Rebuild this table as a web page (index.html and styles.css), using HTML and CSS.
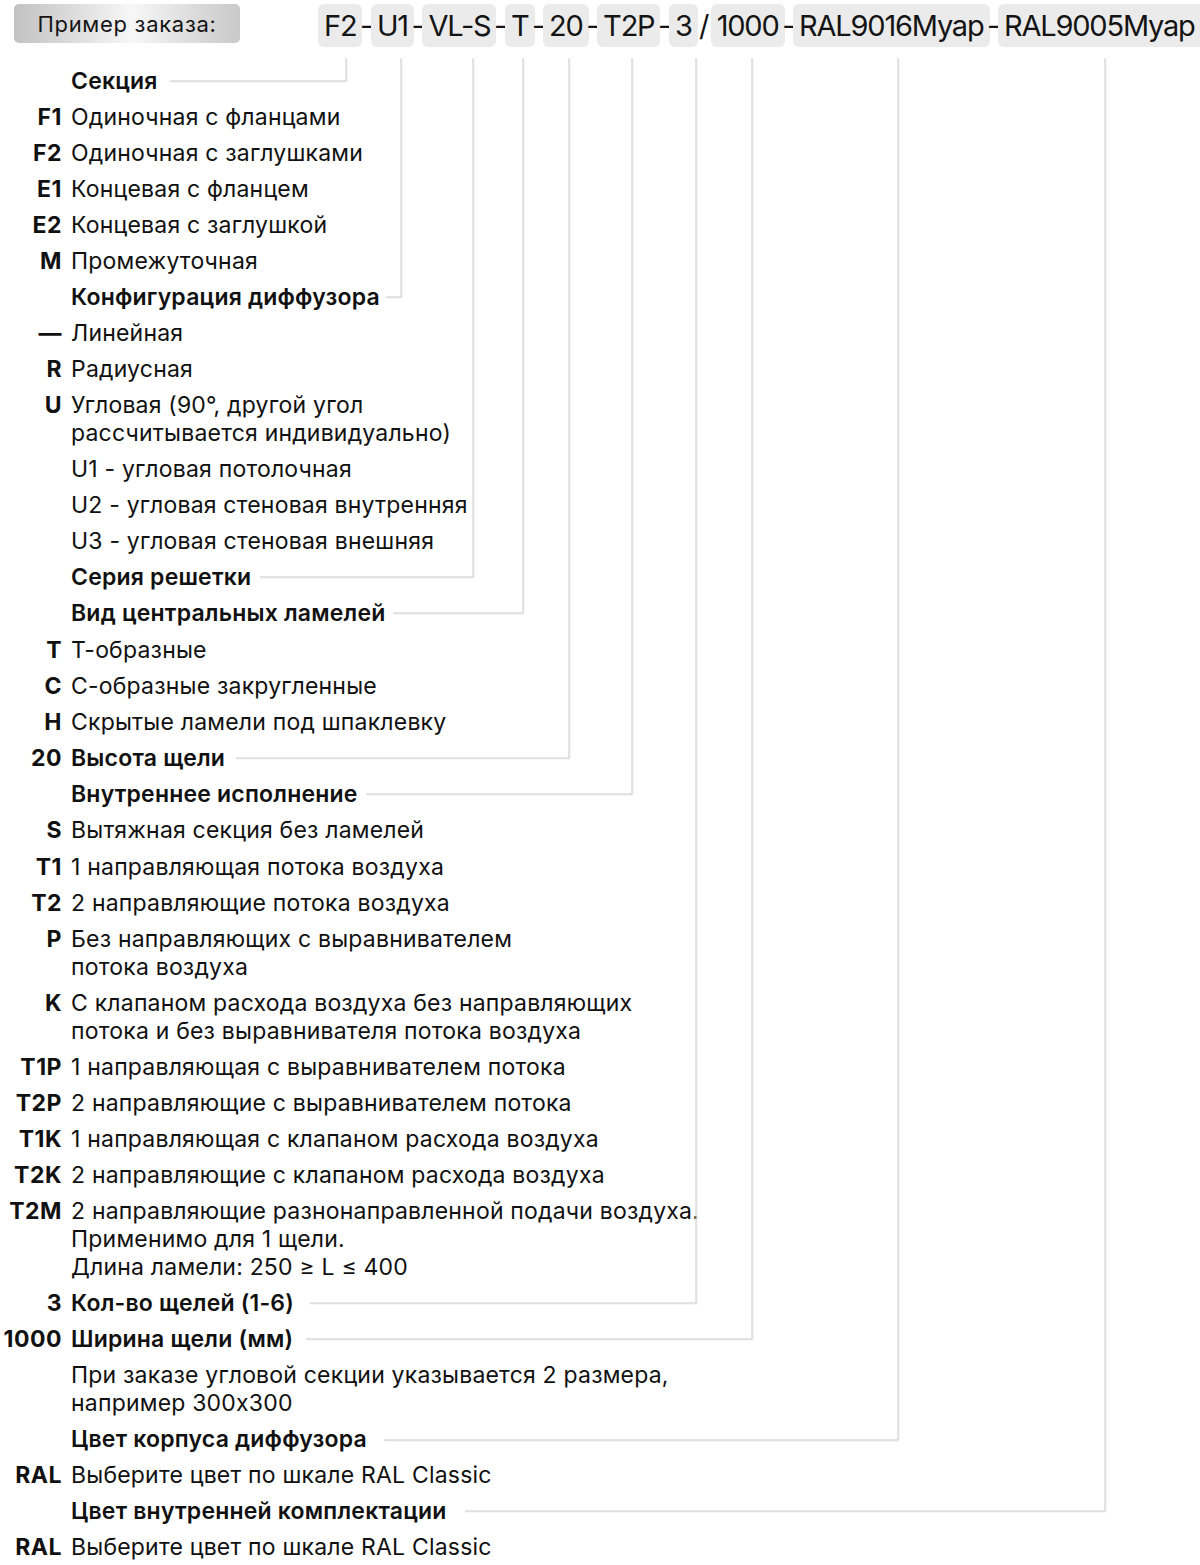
FILE: index.html
```html
<!DOCTYPE html>
<html lang="ru">
<head>
<meta charset="utf-8">
<title>Пример заказа</title>
<link rel="stylesheet" href="styles.css">
</head>
<body>
<div class="page">
  <header class="order">
    <div class="order-label">Пример заказа:</div>
    <div class="chips">
      <span class="chip">F2</span><span class="sep">-</span>
      <span class="chip">U1</span><span class="sep">-</span>
      <span class="chip">VL-S</span><span class="sep">-</span>
      <span class="chip">T</span><span class="sep">-</span>
      <span class="chip">20</span><span class="sep">-</span>
      <span class="chip">T2P</span><span class="sep">-</span>
      <span class="chip">3</span><span class="sep slash">/</span>
      <span class="chip">1000</span><span class="sep">-</span>
      <span class="chip">RAL9016Myap</span><span class="sep">-</span>
      <span class="chip last">RAL9005Myap</span>
    </div>
  </header>

  <ul class="legend">
    <li class="row head"><span class="code"></span><span class="desc">Секция</span></li>
    <li class="row"><span class="code">F1</span><span class="desc">Одиночная с фланцами</span></li>
    <li class="row"><span class="code">F2</span><span class="desc">Одиночная с заглушками</span></li>
    <li class="row"><span class="code">E1</span><span class="desc">Концевая с фланцем</span></li>
    <li class="row"><span class="code">E2</span><span class="desc">Концевая с заглушкой</span></li>
    <li class="row"><span class="code">M</span><span class="desc">Промежуточная</span></li>
    <li class="row head"><span class="code"></span><span class="desc">Конфигурация диффузора</span></li>
    <li class="row"><span class="code">—</span><span class="desc">Линейная</span></li>
    <li class="row"><span class="code">R</span><span class="desc">Радиусная</span></li>
    <li class="row"><span class="code">U</span><span class="desc">Угловая (90°, другой угол<br>рассчитывается индивидуально)</span></li>
    <li class="row"><span class="code"></span><span class="desc">U1 - угловая потолочная</span></li>
    <li class="row"><span class="code"></span><span class="desc">U2 - угловая стеновая внутренняя</span></li>
    <li class="row"><span class="code"></span><span class="desc">U3 - угловая стеновая внешняя</span></li>
    <li class="row head"><span class="code"></span><span class="desc">Серия решетки</span></li>
    <li class="row head"><span class="code"></span><span class="desc">Вид центральных ламелей</span></li>
    <li class="row nudge"><span class="code">T</span><span class="desc">Т-образные</span></li>
    <li class="row"><span class="code">C</span><span class="desc">С-образные закругленные</span></li>
    <li class="row"><span class="code">H</span><span class="desc">Скрытые ламели под шпаклевку</span></li>
    <li class="row head"><span class="code">20</span><span class="desc">Высота щели</span></li>
    <li class="row head"><span class="code"></span><span class="desc">Внутреннее исполнение</span></li>
    <li class="row"><span class="code">S</span><span class="desc">Вытяжная секция без ламелей</span></li>
    <li class="row nudge"><span class="code">T1</span><span class="desc">1 направляющая потока воздуха</span></li>
    <li class="row"><span class="code">T2</span><span class="desc">2 направляющие потока воздуха</span></li>
    <li class="row"><span class="code">P</span><span class="desc">Без направляющих с выравнивателем<br>потока воздуха</span></li>
    <li class="row"><span class="code">K</span><span class="desc">С клапаном расхода воздуха без направляющих<br>потока и без выравнивателя потока воздуха</span></li>
    <li class="row"><span class="code">T1P</span><span class="desc">1 направляющая с выравнивателем потока</span></li>
    <li class="row"><span class="code">T2P</span><span class="desc">2 направляющие с выравнивателем потока</span></li>
    <li class="row"><span class="code">T1K</span><span class="desc">1 направляющая с клапаном расхода воздуха</span></li>
    <li class="row"><span class="code">T2K</span><span class="desc">2 направляющие с клапаном расхода воздуха</span></li>
    <li class="row"><span class="code">T2M</span><span class="desc">2 направляющие разнонаправленной подачи воздуха.<br>Применимо для 1 щели.<br>Длина ламели: 250 ≥ L ≤ 400</span></li>
    <li class="row head"><span class="code">3</span><span class="desc">Кол-во щелей (1-6)</span></li>
    <li class="row head"><span class="code">1000</span><span class="desc">Ширина щели (мм)</span></li>
    <li class="row"><span class="code"></span><span class="desc">При заказе угловой секции указывается 2 размера,<br>например 300x300</span></li>
    <li class="row head"><span class="code"></span><span class="desc">Цвет корпуса диффузора</span></li>
    <li class="row"><span class="code">RAL</span><span class="desc">Выберите цвет по шкале RAL Classic</span></li>
    <li class="row head"><span class="code"></span><span class="desc">Цвет внутренней комплектации</span></li>
    <li class="row"><span class="code">RAL</span><span class="desc">Выберите цвет по шкале RAL Classic</span></li>
  </ul>

  <svg class="leaders" width="1200" height="1565" viewBox="0 0 1200 1565" aria-hidden="true">
    <g class="shadow" transform="translate(1 1)">
      <polyline points="346,58 346,81 170,81"/>
      <polyline points="401,58 401,297 386,297"/>
      <polyline points="473,58 473,577 260,577"/>
      <polyline points="523,58 523,613 393,613"/>
      <polyline points="569,58 569,758 236,758"/>
      <polyline points="632,58 632,794 366,794"/>
      <polyline points="696,58 696,1303 310,1303"/>
      <polyline points="752,58 752,1339 306,1339"/>
      <polyline points="898,58 898,1440 384,1440"/>
      <polyline points="1105,58 1105,1511 465,1511"/>
    </g>
    <g class="line">
      <polyline points="346,58 346,81 170,81"/>
      <polyline points="401,58 401,297 386,297"/>
      <polyline points="473,58 473,577 260,577"/>
      <polyline points="523,58 523,613 393,613"/>
      <polyline points="569,58 569,758 236,758"/>
      <polyline points="632,58 632,794 366,794"/>
      <polyline points="696,58 696,1303 310,1303"/>
      <polyline points="752,58 752,1339 306,1339"/>
      <polyline points="898,58 898,1440 384,1440"/>
      <polyline points="1105,58 1105,1511 465,1511"/>
    </g>
  </svg>
</div>
</body>
</html>
```

FILE: styles.css
```css
html, body {
  margin: 0;
  padding: 0;
  background: #ffffff;
  overflow: hidden;
}

body {
  width: 1200px;
  font-family: "Inter", "Noto Sans", "Liberation Sans", sans-serif;
  color: #111111;
}

.page {
  position: relative;
  width: 1200px;
  height: 1565px;
}

.order {
  display: flex;
  align-items: flex-start;
  height: 63px;
  padding-top: 4px;
  box-sizing: border-box;
  white-space: nowrap;
}

.order-label {
  margin-left: 14px;
  width: 226px;
  height: 39px;
  border-radius: 5px;
  background: linear-gradient(to right, #c2c2c2 0%, #e0e0e0 30%, #f7f7f7 52%, #e3e3e3 72%, #c9c9c9 100%);
  display: flex;
  align-items: center;
  justify-content: center;
  font-size: 22px;
  letter-spacing: 0.7px;
  color: #141414;
  flex-shrink: 0;
}

.chips {
  display: flex;
  align-items: center;
  margin-left: 78px;
  flex-shrink: 0;
}

.chip {
  display: inline-flex;
  align-items: center;
  justify-content: center;
  height: 43px;
  padding: 0 6px;
  background: #ebebeb;
  border-radius: 6px;
  font-size: 29px;
  letter-spacing: -1.2px;
  color: #141414;
}

.chip.last {
  padding-right: 12px;
}

.sep {
  display: inline-flex;
  justify-content: center;
  width: 8.5px;
  font-size: 29px;
  color: #141414;
}

.sep.slash {
  width: 13px;
}

.legend {
  list-style: none;
  margin: 0;
  padding: 0;
}

.row {
  display: grid;
  grid-template-columns: 62px auto;
  column-gap: 9px;
  padding: 4px 0;
  font-size: 23px;
  line-height: 28px;
  letter-spacing: 0.2px;
}

.row.nudge {
  padding-top: 5px;
}

.code {
  text-align: right;
  font-weight: 700;
  letter-spacing: 0.5px;
  white-space: nowrap;
}

.desc {
  white-space: nowrap;
}

.row.head .desc {
  font-weight: 600;
}

.leaders {
  position: absolute;
  top: 0;
  left: 0;
  pointer-events: none;
}

.leaders polyline {
  fill: none;
  stroke-width: 1;
}

.leaders .line polyline {
  stroke: #cacaca;
}

.leaders .shadow polyline {
  stroke: #eeeeee;
}
```
